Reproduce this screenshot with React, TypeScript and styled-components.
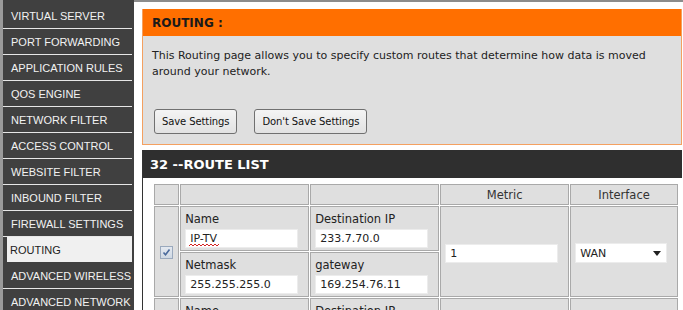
import styled, { createGlobalStyle } from 'styled-components';

const GlobalStyle = createGlobalStyle`
  html, body {
    margin: 0;
    padding: 0;
    background: #ffffff;
    overflow: hidden;
  }
  body {
    font-family: "Liberation Sans", Arial, sans-serif;
  }
`;

const Page = styled.div`
  display: flex;
  align-items: flex-start;
  width: 683px;
  height: 310px;
  overflow: hidden;
`;

const Sidebar = styled.nav`
  width: 131px;
  height: 310px;
  flex-shrink: 0;
  background: #404040;
  border-left: 3px solid #9a9a9a;
  padding-top: 3px;
  box-sizing: content-box;
`;

const NavItem = styled.div<{ $active?: boolean }>`
  height: 25px;
  display: flex;
  align-items: center;
  margin-right: 2px;
  margin-left: ${({ $active }) => ($active ? '4px' : '0')};
  padding-left: ${({ $active }) => ($active ? '3px' : '8px')};
  background: ${({ $active }) => ($active ? '#f0f0f0' : 'transparent')};
  color: ${({ $active }) => ($active ? '#222' : '#f2f2f2')};
  border-bottom: 1px solid ${({ $active }) => ($active ? '#404040' : '#e6e6e6')};
  font-size: 11px;
  white-space: nowrap;
`;

const Main = styled.main`
  flex: 1;
  border-top: 2px solid #8c8c8c;
  padding: 7px 2px 0 8px;
`;

const Panel = styled.section`
  border: 1px solid #f4a060;
  border-top: none;
`;

const PanelTitle = styled.h1`
  margin: 0;
  height: 27px;
  background: #ff6f00;
  display: flex;
  align-items: center;
  padding-left: 9px;
  font-family: "DejaVu Sans", Verdana, sans-serif;
  font-size: 12px;
  font-weight: bold;
  color: #1a1a1a;
`;

const PanelBody = styled.div`
  background: #dfdfdf;
  padding: 12px 9px 10px;
`;

const Intro = styled.p`
  margin: 0;
  font-family: "DejaVu Sans", Verdana, sans-serif;
  font-size: 11px;
  line-height: 16px;
  color: #222;
`;

const ButtonRow = styled.div`
  display: flex;
  gap: 17px;
  margin-top: 29px;
  margin-left: 2px;
`;

const Button = styled.button`
  height: 25px;
  padding: 0 7px;
  border: 1px solid #707070;
  border-radius: 3px;
  background: linear-gradient(#f4f4f4, #e2e2e2);
  font-family: "DejaVu Sans", Verdana, sans-serif;
  font-size: 10px;
  letter-spacing: -0.1px;
  color: #111;
`;

const RouteBox = styled.section`
  margin-top: 5px;
  border-left: 1px solid #333;
`;

const RouteTitle = styled.h2`
  margin: 0;
  height: 28px;
  background: #2f2f2f;
  display: flex;
  align-items: center;
  padding-left: 7px;
  font-family: "DejaVu Sans", Verdana, sans-serif;
  font-size: 13px;
  font-weight: bold;
  color: #ffffff;
`;

const RouteBody = styled.div`
  padding: 5px 3px 0 10px;
`;

const Table = styled.table`
  border-collapse: separate;
  border-spacing: 1px;
  background: #ffffff;
  width: 526px;
  table-layout: fixed;
`;

const Cell = styled.td<{ $center?: boolean }>`
  background: #dfdfdf;
  border: 1px solid #a9a9a9;
  padding: 5px 4px 2px;
  text-align: ${({ $center }) => ($center ? 'center' : 'left')};
  vertical-align: middle;
  font-family: "DejaVu Sans", Verdana, sans-serif;
  font-size: 11.5px;
  color: #222;
`;

const HeadCell = styled(Cell).attrs({ as: 'th' })`
  height: 16px;
  padding: 2px 4px 1px;
  font-weight: normal;
  text-align: center;
  color: #333;
`;

const Label = styled.div`
  line-height: 15px;
  margin-bottom: 2px;
`;

const InputWrap = styled.div`
  position: relative;
  width: 113px;
`;

const TextInput = styled.input`
  display: block;
  box-sizing: border-box;
  width: 113px;
  height: 19px;
  border: 1px solid #ececec;
  background: #fff;
  padding: 0 4px;
  font-family: "DejaVu Sans", Verdana, sans-serif;
  font-size: 11px;
  color: #222;
  outline: none;
`;

/* red spell-check squiggle drawn over the input */
const Squiggle = styled.svg`
  position: absolute;
  left: 4px;
  bottom: 1px;
  pointer-events: none;
`;

const FakeSelect = styled.div`
  box-sizing: border-box;
  width: 92px;
  height: 20px;
  border: 1px solid #ececec;
  background: #fff;
  display: flex;
  align-items: center;
  justify-content: space-between;
  padding: 0 5px 0 4px;
  font-size: 11px;
  color: #222;
`;

const Check = styled.span`
  display: inline-flex;
  align-items: center;
  justify-content: center;
  width: 11px;
  height: 11px;
  border: 1px solid #9aa9bd;
  background: linear-gradient(#e4e9f0, #cfd8e3);
`;

const navItems = [
  'VIRTUAL SERVER',
  'PORT FORWARDING',
  'APPLICATION RULES',
  'QOS ENGINE',
  'NETWORK FILTER',
  'ACCESS CONTROL',
  'WEBSITE FILTER',
  'INBOUND FILTER',
  'FIREWALL SETTINGS',
  'ROUTING',
  'ADVANCED WIRELESS',
  'ADVANCED NETWORK',
];

export default function App() {
  return (
    <>
      <GlobalStyle />
      <Page>
        <Sidebar>
          {navItems.map((item) => (
            <NavItem key={item} $active={item === 'ROUTING'}>
              {item}
            </NavItem>
          ))}
        </Sidebar>
        <Main>
          <Panel>
            <PanelTitle>ROUTING :</PanelTitle>
            <PanelBody>
              <Intro>
                This Routing page allows you to specify custom routes that determine how data is moved
                <br />
                around your network.
              </Intro>
              <ButtonRow>
                <Button>Save Settings</Button>
                <Button>Don't Save Settings</Button>
              </ButtonRow>
            </PanelBody>
          </Panel>
          <RouteBox>
            <RouteTitle>32 --ROUTE LIST</RouteTitle>
            <RouteBody>
              <Table>
                <colgroup>
                  <col style={{ width: 25 }} />
                  <col style={{ width: 128 }} />
                  <col style={{ width: 128 }} />
                  <col style={{ width: 128 }} />
                  <col style={{ width: 107 }} />
                </colgroup>
                <thead>
                  <tr>
                    <HeadCell />
                    <HeadCell />
                    <HeadCell />
                    <HeadCell>Metric</HeadCell>
                    <HeadCell>Interface</HeadCell>
                  </tr>
                </thead>
                <tbody>
                  <tr>
                    <Cell rowSpan={2} $center>
                      <Check>
                        <svg width="9" height="9" viewBox="0 0 9 9">
                          <path d="M1.5 4.5 L3.5 6.8 L7.5 1.5" fill="none" stroke="#4a6a9c" strokeWidth="1.6" />
                        </svg>
                      </Check>
                    </Cell>
                    <Cell>
                      <Label>Name</Label>
                      <InputWrap>
                        <TextInput defaultValue="IP-TV" spellCheck />
                        <Squiggle width="30" height="4" viewBox="0 0 30 4">
                          <path
                            d="M0 3 L2 1 L4 3 L6 1 L8 3 L10 1 L12 3 L14 1 L16 3 L18 1 L20 3 L22 1 L24 3 L26 1 L28 3 L30 1"
                            fill="none"
                            stroke="#d42020"
                            strokeWidth="1"
                          />
                        </Squiggle>
                      </InputWrap>
                    </Cell>
                    <Cell>
                      <Label>Destination IP</Label>
                      <TextInput defaultValue="233.7.70.0" />
                    </Cell>
                    <Cell rowSpan={2}>
                      <TextInput defaultValue="1" />
                    </Cell>
                    <Cell rowSpan={2}>
                      <FakeSelect>
                        WAN
                        <svg width="8" height="5" viewBox="0 0 8 5">
                          <path d="M0 0 H8 L4 5 Z" fill="#222" />
                        </svg>
                      </FakeSelect>
                    </Cell>
                  </tr>
                  <tr>
                    <Cell>
                      <Label>Netmask</Label>
                      <TextInput defaultValue="255.255.255.0" />
                    </Cell>
                    <Cell>
                      <Label>gateway</Label>
                      <TextInput defaultValue="169.254.76.11" />
                    </Cell>
                  </tr>
                  <tr>
                    <Cell rowSpan={2} />
                    <Cell>
                      <Label>Name</Label>
                      <TextInput />
                    </Cell>
                    <Cell>
                      <Label>Destination IP</Label>
                      <TextInput />
                    </Cell>
                    <Cell rowSpan={2} />
                    <Cell rowSpan={2} />
                  </tr>
                </tbody>
              </Table>
            </RouteBody>
          </RouteBox>
        </Main>
      </Page>
    </>
  );
}
